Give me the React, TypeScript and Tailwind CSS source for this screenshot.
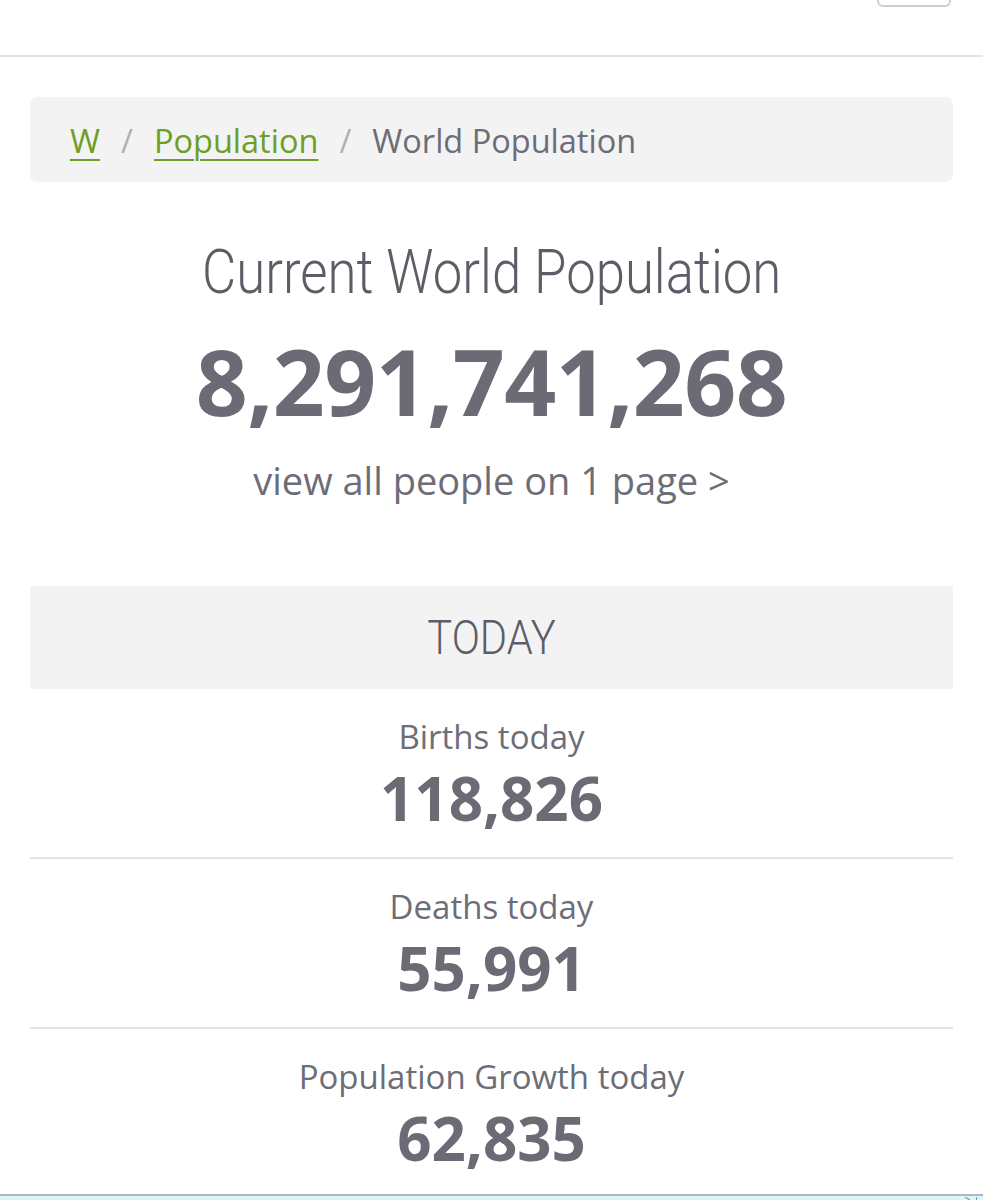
import React from "react";

const rows = [
  { label: "Births today", value: "118,826" },
  { label: "Deaths today", value: "55,991" },
  { label: "Population Growth today", value: "62,835" },
];

export default function App() {
  return (
    <div className="relative w-[983px] h-[1200px] overflow-hidden bg-white flex flex-col font-['Open_Sans',sans-serif] text-[#6d6d77]">
      <header className="h-[57px] shrink-0 border-b-2 border-[#e3e3e3] flex justify-end pr-[32px]">
        <div className="w-[74px] h-[7px] border-2 border-t-0 border-[#cfcfcf] rounded-b-[6px]" />
      </header>
      <main className="flex-1 px-[30px] pt-[40px] flex flex-col">
        <nav className="h-[85px] bg-[#f3f3f4] rounded-[7px] flex items-center pl-[40px] pt-[4px] text-[32.5px] gap-[21px]">
          <a className="text-[#6d9f24] underline underline-offset-[6px] decoration-2">W</a>
          <span className="text-[#b0b0b4]">/</span>
          <a className="text-[#6d9f24] underline underline-offset-[6px] decoration-2">Population</a>
          <span className="text-[#b0b0b4]">/</span>
          <span>World Population</span>
        </nav>
        <section className="flex flex-col items-center pt-[55px]">
          <h1 className="font-['Roboto',sans-serif] font-light text-[62px] leading-[70px] text-[#5d5d67] scale-x-[0.85]">
            Current World Population
          </h1>
          <div className="font-bold text-[91px] leading-[110px] mt-[19px] text-[#6b6b75] tracking-[-0.5px]">8,291,741,268</div>
          <div className="text-[38px] leading-[48px] mt-[20px]">view all people on 1 page &gt;</div>
        </section>
        <div className="mt-[82px] h-[103px] shrink-0 bg-[#f3f3f4] flex items-center justify-center">
          <span className="font-['Roboto',sans-serif] font-light text-[49px] text-[#5d5d67] scale-x-[0.85]">TODAY</span>
        </div>
        {rows.map((r) => (
          <div key={r.label} className="h-[170px] shrink-0 border-b-2 border-[#e3e3e3] flex flex-col items-center pt-[26px]">
            <div className="text-[33px] leading-[44px]">{r.label}</div>
            <div className="font-bold text-[60px] leading-[74px] mt-[2px] text-[#6b6b75]">{r.value}</div>
          </div>
        ))}
      </main>
      <div className="absolute left-0 top-[1194px] w-[983px] h-[6px] bg-[#e0f5f3] border-t-2 border-[#a9bcbc] flex justify-end items-start gap-[5px] pr-[6px]">
        <svg width="7" height="5" viewBox="0 0 7 5" className="mt-[1px]">
          <path d="M1 0 L6 3" stroke="#5aa7c7" strokeWidth="1.2" fill="none" />
        </svg>
        <div className="w-[1px] h-[4px] bg-[#5aa7c7] mt-[1px]" />
      </div>
    </div>
  );
}
